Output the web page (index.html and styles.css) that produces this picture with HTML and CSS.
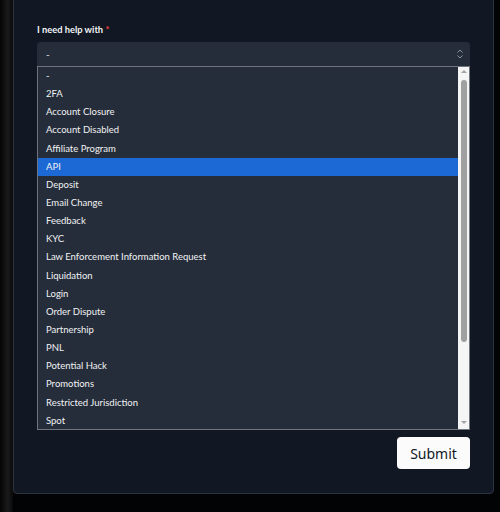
FILE: index.html
```html
<!DOCTYPE html>
<html lang="en">
<head>
    <meta charset="UTF-8">
    <meta name="viewport" content="width=device-width, initial-scale=1.0">
    <title>Support Request</title>
    <link rel="stylesheet" href="styles.css">
</head>
<body>
    <div class="edge"></div>
    <div class="panel">
        <label class="field-label">I need help with <span class="req">*</span></label>
        <div class="select-box">
            <span>-</span>
            <svg class="chevrons" width="8" height="12" viewBox="0 0 8 12">
                <path d="M1.5 4.5 L4 2 L6.5 4.5 M1.5 7.5 L4 10 L6.5 7.5" fill="none" stroke="#8a93a0" stroke-width="1"/>
            </svg>
        </div>
        <div class="dropdown">
            <ul class="options">
                <li>-</li>
                <li>2FA</li>
                <li>Account Closure</li>
                <li>Account Disabled</li>
                <li>Affiliate Program</li>
                <li class="active">API</li>
                <li>Deposit</li>
                <li>Email Change</li>
                <li>Feedback</li>
                <li>KYC</li>
                <li>Law Enforcement Information Request</li>
                <li>Liquidation</li>
                <li>Login</li>
                <li>Order Dispute</li>
                <li>Partnership</li>
                <li>PNL</li>
                <li>Potential Hack</li>
                <li>Promotions</li>
                <li>Restricted Jurisdiction</li>
                <li>Spot</li>
            </ul>
            <div class="scrollbar">
                <div class="arrow up"></div>
                <div class="track"><div class="thumb"></div></div>
                <div class="arrow down"></div>
            </div>
        </div>
        <div class="actions">
            <button class="submit">Submit</button>
        </div>
    </div>
</body>
</html>
```
FILE: styles.css
```css
body {
    margin: 0;
    background-color: #020305;
    font-family: Lato, "Noto Sans", Arial, sans-serif;
    display: flex;
    height: 512px;
    overflow: hidden;
}
.edge {
    width: 13px;
    background: linear-gradient(to right, #050505, #1a1a1a 60%, #0a0a0a);
}
.panel {
    width: 433px;
    margin-top: -10px;
    height: 469px;
    padding: 33px 23px 0 23px;
    background-color: #111723;
    border: 1px solid #2c3441;
    border-radius: 4px;
    display: flex;
    flex-direction: column;
}
.field-label {
    font-size: 9.3px;
    font-weight: 700;
    color: #f3f4f6;
    height: 12px;
    line-height: 12px;
    margin-bottom: 6px;
}
.req {
    color: #ef4444;
}
.select-box {
    height: 24px;
    background-color: #252d3a;
    border-radius: 4px 4px 0 0;
    display: flex;
    align-items: center;
    justify-content: space-between;
    padding: 0 6px 0 9px;
    color: #e5e7eb;
    font-size: 10px;
}
.dropdown {
    height: 362px;
    border: 1px solid #70757d;
    background-color: #252d3a;
    display: flex;
}
.options {
    flex: 1;
    list-style: none;
    margin: 0;
    padding: 0;
}
.options li {
    height: 18.15px;
    line-height: 18px;
    padding-left: 8px;
    font-size: 9.5px;
    color: #f1f2f4;
}
.options li.active {
    background-color: #1c68d4;
}
.scrollbar {
    width: 11px;
    background-color: #f5f5f5;
    display: flex;
    flex-direction: column;
    align-items: center;
}
.arrow {
    width: 0;
    height: 0;
    border-left: 3px solid transparent;
    border-right: 3px solid transparent;
}
.arrow.up {
    margin-top: 3px;
    border-bottom: 3px solid #a3a3a3;
    margin-bottom: 7px;
}
.arrow.down {
    border-top: 3px solid #a3a3a3;
    margin-top: 4px;
    margin-bottom: 5px;
}
.track {
    flex: 1;
    width: 100%;
    display: flex;
    justify-content: center;
}
.thumb {
    width: 6px;
    height: 262px;
    border-radius: 3px;
    background-color: #a0a0a0;
}
.actions {
    display: flex;
    justify-content: flex-end;
    margin-top: 7px;
}
.submit {
    font-family: "Noto Sans", "Open Sans", Arial, sans-serif;
    font-size: 14px;
    color: #111827;
    background-color: #fbfbfb;
    border: none;
    border-radius: 4px;
    width: 73px;
    height: 32px;
    padding: 0;
}
```
